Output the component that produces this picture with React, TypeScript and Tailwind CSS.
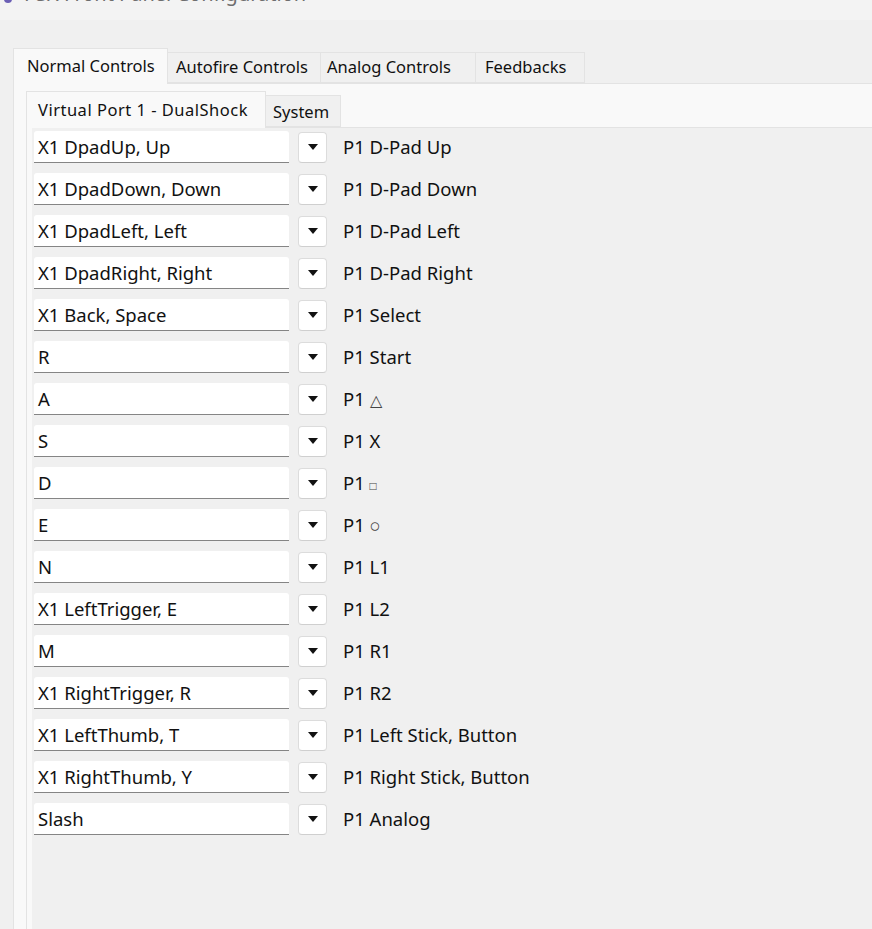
import React from "react";

const rows: [string, React.ReactNode][] = [
  ["X1 DpadUp, Up", "P1 D-Pad Up"],
  ["X1 DpadDown, Down", "P1 D-Pad Down"],
  ["X1 DpadLeft, Left", "P1 D-Pad Left"],
  ["X1 DpadRight, Right", "P1 D-Pad Right"],
  ["X1 Back, Space", "P1 Select"],
  ["R", "P1 Start"],
  ["A", <>P1 <span className="text-[16px] text-[#444]">△</span></>],
  ["S", "P1 X"],
  ["D", <>P1 <span className="text-[12px] text-[#444]">□</span></>],
  ["E", <>P1 <span className="text-[#444]">○</span></>],
  ["N", "P1 L1"],
  ["X1 LeftTrigger, E", "P1 L2"],
  ["M", "P1 R1"],
  ["X1 RightTrigger, R", "P1 R2"],
  ["X1 LeftThumb, T", "P1 Left Stick, Button"],
  ["X1 RightThumb, Y", "P1 Right Stick, Button"],
  ["Slash", "P1 Analog"],
];

function Row({ value, label }: { value: string; label: React.ReactNode }) {
  return (
    <div className="flex items-center h-[32px] text-[18.5px]">
      <div className="w-[255px] h-[32px] bg-white rounded-t-[3px] border-b border-[#858585] flex items-center pl-[4px] text-[#111]">
        {value}
      </div>
      <div className="ml-[9px] w-[29px] h-[31px] bg-white rounded-[4px] border border-[#dcdcdc] border-b-[#cfcfcf] flex items-center justify-center">
        <svg width="10" height="6" viewBox="0 0 10 6">
          <path d="M0 0 H10 L5 6 Z" fill="#111" />
        </svg>
      </div>
      <div className="ml-[16px] text-[#111]">{label}</div>
    </div>
  );
}

export default function App() {
  return (
    <div className="w-[872px] h-[929px] overflow-hidden bg-[#f0f0f0] text-[16.5px] font-['Segoe_UI','Noto_Sans',sans-serif]">
      {/* title bar, scrolled off the top */}
      <div className="h-[20px] bg-[#f3f3f3] overflow-hidden flex items-start">
        <div className="ml-[4px] mt-[-5px] w-[8px] h-[8px] rounded-full bg-[#6b5fb5]" />
        <div className="ml-[12px] mt-[-20px] text-[20px] text-[#6e6e6e] leading-[28px] whitespace-nowrap">
          PSX Front Panel Configuration
        </div>
      </div>

      <div className="pl-[13px] pt-[27px]">
        {/* outer tabs */}
        <div className="flex items-end h-[36px]">
          <div className="h-[36px] w-[155px] bg-[#f9f9f9] border border-b-0 border-[#e3e3e3] flex items-center pl-[13px] text-[#111] relative z-10 mb-[-1px]">
            Normal Controls
          </div>
          <div className="h-[31px] w-[153px] bg-[#f0f0f0] border border-l-0 border-[#e3e3e3] flex items-center pl-[8px] text-[#111]">
            Autofire Controls
          </div>
          <div className="h-[31px] w-[155px] bg-[#f0f0f0] border border-l-0 border-[#e3e3e3] flex items-center pl-[6px] text-[#111]">
            Analog Controls
          </div>
          <div className="h-[31px] w-[109px] bg-[#f0f0f0] border border-l-0 border-[#e3e3e3] flex items-center pl-[9px] text-[#111]">
            Feedbacks
          </div>
        </div>

        {/* outer panel */}
        <div className="bg-[#f9f9f9] border-l border-t border-[#e3e3e3] pl-[12px] pt-[7px] h-[900px]">
          {/* inner tabs */}
          <div className="flex items-end h-[36px]">
            <div className="h-[37px] w-[240px] bg-[#f9f9f9] border border-b-0 border-[#e3e3e3] flex items-center pl-[11px] tracking-[0.5px] text-[#111] relative z-10 mb-[-1px]">
              Virtual Port 1 - DualShock
            </div>
            <div className="h-[32px] w-[75px] bg-[#f0f0f0] border border-l-0 border-[#e3e3e3] flex items-center pl-[7px] pt-[3px] text-[#111]">
              System
            </div>
          </div>

          {/* inner panel */}
          <div className="bg-[#f9f9f9] border-l border-t border-[#e3e3e3] pl-[5px] h-[900px]">
            <div className="bg-[#f0f0f0] h-full pl-[2px] pt-[3px] flex flex-col gap-[10px]">
              {rows.map(([v, l], i) => (
                <Row key={i} value={v} label={l} />
              ))}
            </div>
          </div>
        </div>
      </div>
    </div>
  );
}
